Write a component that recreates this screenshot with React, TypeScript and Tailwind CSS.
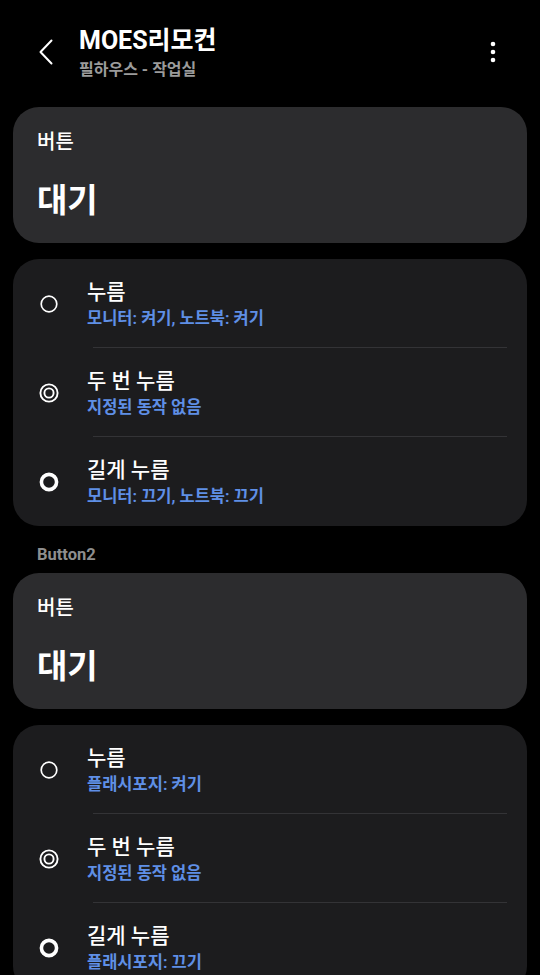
import React from "react";

const font = { fontFamily: '"Roboto", "Noto Sans CJK KR", sans-serif' };

function RadioIcon({ kind }: { kind: "thin" | "double" | "thick" }) {
  return (
    <svg width="24" height="24" viewBox="0 0 24 24" className="shrink-0">
      {kind === "thin" && <circle cx="12" cy="12" r="7.8" fill="none" stroke="#fff" strokeWidth="1.7" />}
      {kind === "double" && (
        <>
          <circle cx="12" cy="12" r="8.6" fill="none" stroke="#fff" strokeWidth="1.9" />
          <circle cx="12" cy="12" r="4.6" fill="none" stroke="#fff" strokeWidth="1.9" />
        </>
      )}
      {kind === "thick" && <circle cx="12" cy="12" r="7.6" fill="none" stroke="#fff" strokeWidth="3.6" />}
    </svg>
  );
}

function StatusCard() {
  return (
    <div className="rounded-[26px] bg-[#2c2c2e] px-[24px] pt-[22px] pb-[21px]">
      <div className="text-[20px] leading-[26px] font-medium text-white">버튼</div>
      <div className="mt-[25px] text-[33px] leading-[42px] font-bold text-white">대기</div>
    </div>
  );
}

type Row = { title: string; sub: string; icon: "thin" | "double" | "thick" };

function ActionCard({ rows }: { rows: Row[] }) {
  return (
    <div className="rounded-[26px] bg-[#1c1c1e] overflow-hidden">
      {rows.map((r, i) => (
        <div key={i} className="relative flex h-[89px] items-center pl-[24px]">
          <RadioIcon kind={r.icon} />
          <div className="ml-[26px] flex flex-col">
            <div className="text-[21px] leading-[26px] font-medium text-white">{r.title}</div>
            <div className="mt-[3px] text-[16.5px] leading-[21px] font-semibold text-[#5f8fe6]">{r.sub}</div>
          </div>
          {i < rows.length - 1 && (
            <div className="absolute bottom-0 left-[80px] right-[20px] h-px bg-[#333336]" />
          )}
        </div>
      ))}
    </div>
  );
}

export default function App() {
  return (
    <div className="h-[975px] w-[540px] overflow-hidden bg-black" style={font}>
      <div className="flex h-[107px] items-start pt-[26px]">
        <div className="flex h-[52px] w-[79px] items-center pl-[38px]">
          <svg width="16" height="26" viewBox="0 0 16 26">
            <path d="M13.5 1.5 L2.5 13 L13.5 24.5" fill="none" stroke="#fff" strokeWidth="2" strokeLinecap="round" strokeLinejoin="round" />
          </svg>
        </div>
        <div className="flex flex-1 flex-col">
          <div className="text-[25px] leading-[30px] font-bold text-white">MOES리모컨</div>
          <div className="mt-[3px] text-[16px] leading-[21px] font-bold text-[#9b9b9b]">필하우스 - 작업실</div>
        </div>
        <div className="flex h-[52px] w-[60px] items-center pr-[44px] justify-end">
          <svg width="6" height="24" viewBox="0 0 6 24">
            <circle cx="3" cy="4" r="2.3" fill="#fff" />
            <circle cx="3" cy="12" r="2.3" fill="#fff" />
            <circle cx="3" cy="20" r="2.3" fill="#fff" />
          </svg>
        </div>
      </div>
      <div className="flex flex-col px-[13px]">
        <StatusCard />
        <div className="mt-[16px]">
          <ActionCard
            rows={[
              { title: "누름", sub: "모니터: 켜기, 노트북: 켜기", icon: "thin" },
              { title: "두 번 누름", sub: "지정된 동작 없음", icon: "double" },
              { title: "길게 누름", sub: "모니터: 끄기, 노트북: 끄기", icon: "thick" },
            ]}
          />
        </div>
        <div className="mt-[19px] mb-[8px] pl-[24px] text-[16.5px] leading-[20px] font-bold text-[#8e8e8e]">Button2</div>
        <StatusCard />
        <div className="mt-[16px]">
          <ActionCard
            rows={[
              { title: "누름", sub: "플래시포지: 켜기", icon: "thin" },
              { title: "두 번 누름", sub: "지정된 동작 없음", icon: "double" },
              { title: "길게 누름", sub: "플래시포지: 끄기", icon: "thick" },
            ]}
          />
        </div>
      </div>
    </div>
  );
}
